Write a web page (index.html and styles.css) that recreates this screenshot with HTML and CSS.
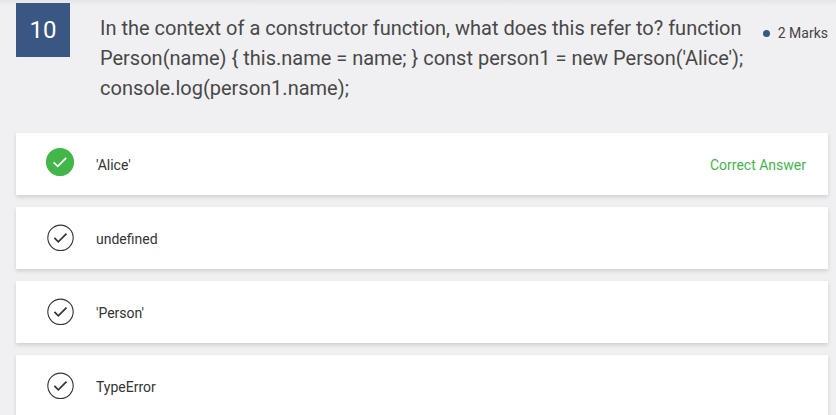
FILE: index.html
```html
<!DOCTYPE html>
<html lang="en">
<head>
<meta charset="utf-8">
<title>Question 10</title>
<link rel="stylesheet" href="styles.css">
</head>
<body>
<main class="question">
  <header class="head">
    <div class="number">10</div>
    <h1 class="title">In the context of a constructor function, what does this refer to? function Person(name) { this.name = name; } const person1 = new Person('Alice'); console.log(person1.name);</h1>
    <div class="marks"><span class="dot"></span>2 Marks</div>
  </header>
  <ul class="answers">
    <li class="answer correct">
      <svg class="icon" viewBox="0 0 28 28"><circle cx="14" cy="14" r="13.5"/><path d="M7.6 14.3l4.1 4 8.500-8.400"/></svg>
      <span>'Alice'</span><span class="note">Correct Answer</span>
    </li>
    <li class="answer">
      <svg class="icon" viewBox="0 0 28 28"><circle cx="14.5" cy="13.8" r="12.7"/><path d="M8.400 13.800l3.900 4 8.200-8.200"/></svg>
      <span>undefined</span>
    </li>
    <li class="answer">
      <svg class="icon" viewBox="0 0 28 28"><circle cx="14.5" cy="13.8" r="12.7"/><path d="M8.400 13.800l3.900 4 8.200-8.200"/></svg>
      <span>'Person'</span>
    </li>
    <li class="answer">
      <svg class="icon" viewBox="0 0 28 28"><circle cx="14.5" cy="13.8" r="12.7"/><path d="M8.400 13.800l3.900 4 8.200-8.200"/></svg>
      <span>TypeError</span>
    </li>
  </ul>
</main>
</body>
</html>
```
FILE: styles.css
```css
* { box-sizing: border-box; }
html { overflow: hidden; }
body {
  margin: 0;
  height: 415px;
  overflow: hidden;
  background: linear-gradient(#e5e5e7, #f0f0f2 6px) #f0f0f2;
  color: #333;
  font: 14px/20px Roboto, sans-serif;
  -webkit-font-smoothing: antialiased;
}
.question { padding: 3px 8px 0 16px; }
.head { display: flex; height: 130px; }
.number {
  width: 54px;
  height: 54px;
  background: #3a5683;
  color: #fff;
  font-size: 24px;
  line-height: 54px;
  text-align: center;
}
.title {
  width: 650px;
  margin: 10px 0 0 30px;
  color: #484848;
  font-size: 20px;
  line-height: 30px;
  font-weight: 400;
}
.marks {
  display: flex;
  align-items: center;
  height: 20px;
  margin: 20px 0 0 auto;
  gap: 8px;
  color: #444;
  white-space: nowrap;
}
.dot { width: 7px; height: 7px; border-radius: 50%; background: #3a5683; }
.answers { margin: 0; padding: 0; list-style: none; display: grid; gap: 12px; }
.answer {
  display: flex;
  align-items: center;
  height: 62px;
  padding: 2px 22px 0 30px;
  background: #fff;
  box-shadow: 0 2px 4px rgba(0, 0, 0, .14);
}
.icon {
  width: 28px;
  height: 28px;
  margin: -2px 22px 0 0;
  fill: none;
  stroke: #333;
  stroke-width: 1.1;
}
.icon path { stroke-width: 1.7; }
.correct .icon { margin-top: -6px; }
.correct .icon circle { fill: #43b649; stroke: #43b649; }
.correct .icon path { stroke: #fff; }
.note { margin-left: auto; color: #43b649; }
```
